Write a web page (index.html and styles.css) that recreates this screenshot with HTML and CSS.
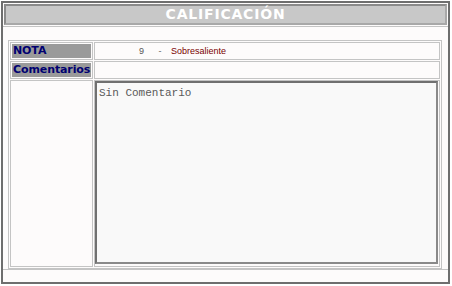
FILE: index.html
```html
<!DOCTYPE html>
<html lang="es">
<head>
    <meta charset="utf-8" />
    <title>Calificación</title>
    <link rel="stylesheet" href="styles.css">
</head>
<body>
    <div class="panel">
        <div class="title">CALIFICACIÓN</div>
        <div class="content">
            <table class="grade">
                <tr class="line">
                    <td class="label"><div>NOTA</div></td>
                    <td class="value">
                        <span class="num">9</span>
                        <span class="dash">-</span>
                        <span class="word">Sobresaliente</span>
                    </td>
                </tr>
                <tr class="line">
                    <td class="label"><div>Comentarios</div></td>
                    <td class="value"></td>
                </tr>
                <tr class="big">
                    <td class="empty"></td>
                    <td class="box">
                        <div class="comment">Sin Comentario</div>
                    </td>
                </tr>
            </table>
        </div>
        <div class="foot"></div>
    </div>
</body>
</html>
```
FILE: styles.css
```css
html, body {
    margin: 0;
    padding: 0;
    background: #fff;
}

.panel {
    box-sizing: border-box;
    width: 449px;
    height: 283px;
    margin: 1px 0 0 1px;
    border: 2px solid #6e6e6e;
    background: #fdfbfb;
    display: flex;
    flex-direction: column;
}

.title {
    box-sizing: border-box;
    height: 21px;
    margin: 1px 1px 0 1px;
    background: #c8c8c8;
    border: 2px solid #8a8a8a;
    border-right-color: #a8a8a8;
    border-bottom-color: #a8a8a8;
    color: #fff;
    font: bold 14px "DejaVu Sans", Verdana, sans-serif;
    letter-spacing: 0.8px;
    text-align: center;
    line-height: 17px;
}

.content {
    border-top: 1px solid #c4c4c4;
    margin-top: 1px;
    padding: 13px 5px 0 5px;
}

.grade {
    width: 434px;
    border: 1px solid #c4c4c4;
    border-spacing: 1px;
    table-layout: fixed;
    font-family: "Liberation Sans", Arial, sans-serif;
}

.grade td {
    border: 1px solid #c4c4c4;
    padding: 0;
}

.line td {
    height: 16px;
}

.label {
    width: 81px;
}

.label div {
    margin: 1px;
    height: 14px;
    background: #9a9a9a;
    color: #000070;
    font: bold 11px "DejaVu Sans", Verdana, sans-serif;
    line-height: 14px;
    padding-left: 1px;
    white-space: nowrap;
    overflow: hidden;
    letter-spacing: -0.1px;
}

.value {
    font-size: 9px;
    white-space: nowrap;
}

.num {
    color: #555;
    margin-left: 44px;
}

.dash {
    color: #666;
    margin-left: 12px;
}

.word {
    color: #7a0000;
    margin-left: 7px;
}

.big td {
    height: 185px;
    vertical-align: top;
}

.comment {
    box-sizing: border-box;
    height: 183px;
    margin: 0 1px 0 0;
    border: 2px solid #707070;
    border-right-color: #8a8a8a;
    border-bottom-color: #8a8a8a;
    background: #f9f9f9;
    color: #5a5a5a;
    font: 11px "Liberation Mono", "Courier New", monospace;
    padding: 4px 2px;
}

.foot {
    flex: 1;
    border-top: 1px solid #c4c4c4;
}
```
